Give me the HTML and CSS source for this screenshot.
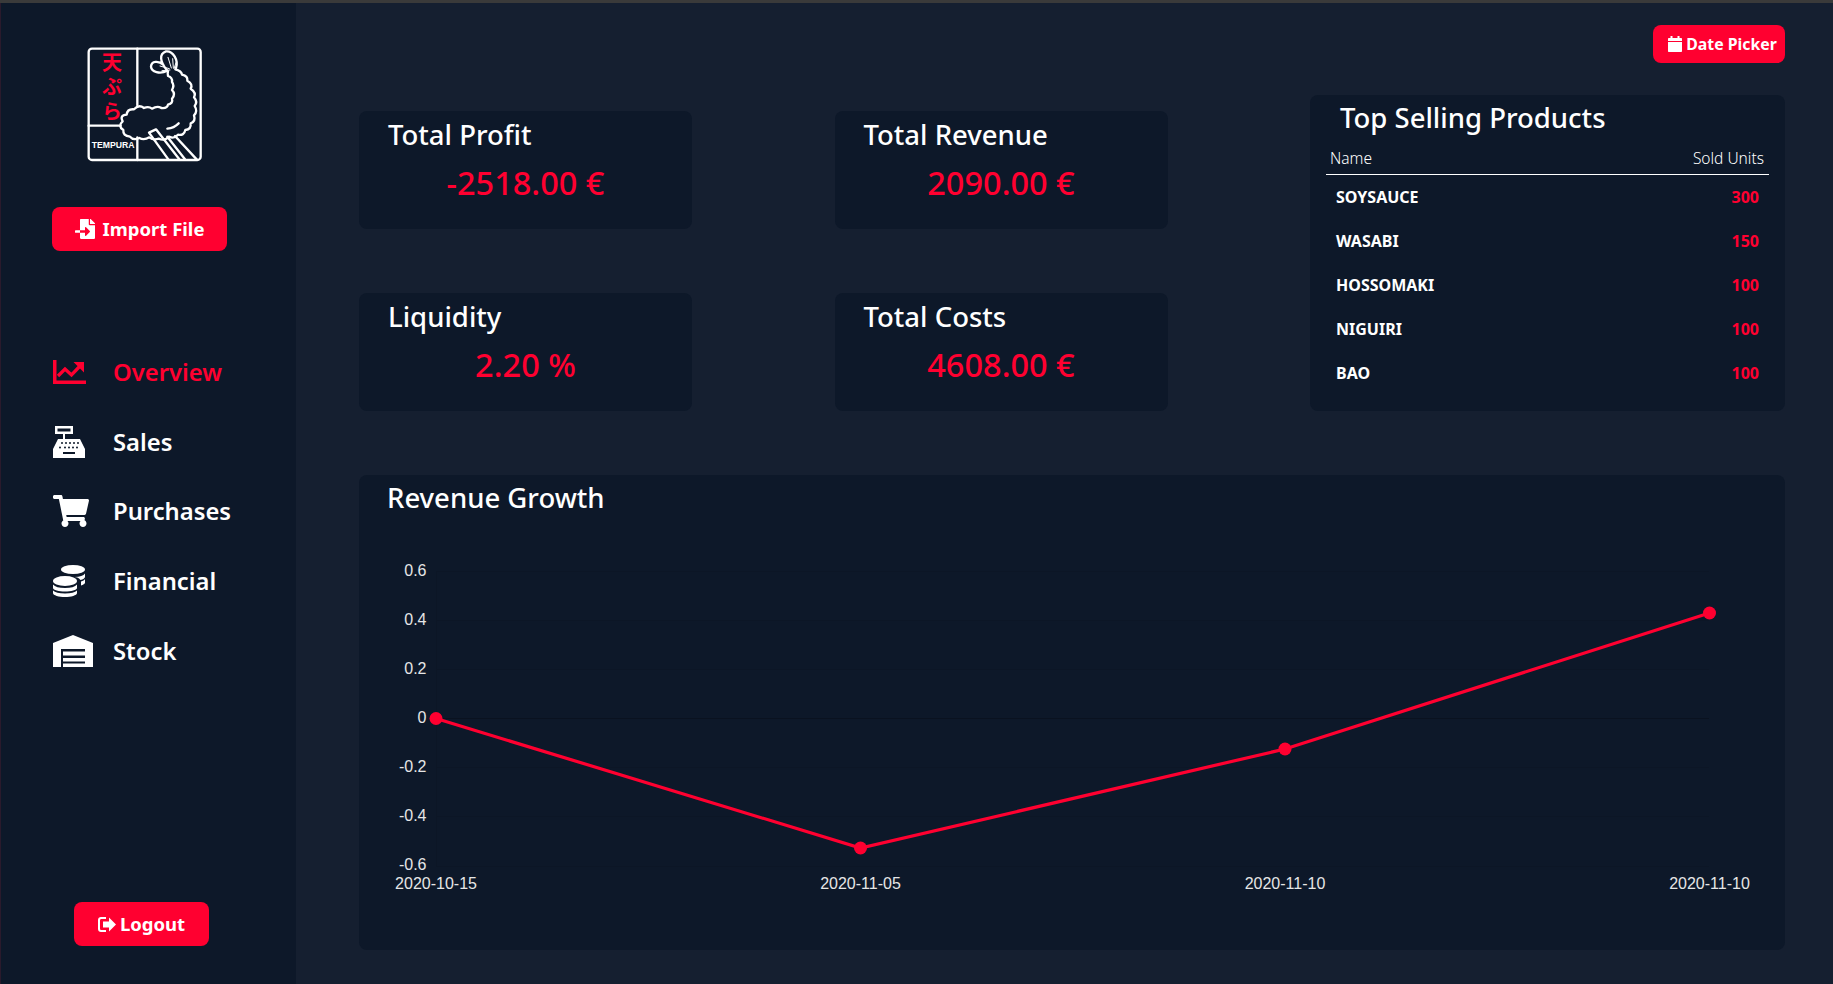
FILE: index.html
```html
<!DOCTYPE html>
<html lang="en">
<head>
<meta charset="utf-8">
<title>Tempura Dashboard</title>
<link rel="stylesheet" href="styles.css">
</head>
<body>
<div class="app">
  <aside class="sidebar">
    <svg class="logo" viewBox="0 0 390 390" aria-label="Tempura logo">
      <g fill="none" stroke="#fff" stroke-width="7" stroke-linecap="round" stroke-linejoin="round">
        <rect x="26" y="26" width="336" height="334" rx="10"/>
        <path d="M172 26V196M172 292V360M26 257H122"/>
        <path d="M262 92C240 66 236 42 258 34C280 32 296 62 288 84M262 92C240 104 214 96 213 80C214 62 236 62 250 74"/>
        <path d="M264 52L274 84M278 56L280 84M288 68L282 86M240 78L268 86M246 92L270 90" stroke-width="3"/>
        <path d="M286 88Q304 92 306 104Q324 108 322 122Q340 132 332 146Q350 158 342 172Q354 186 344 198Q354 214 342 226Q348 244 332 250Q334 268 316 270Q312 288 294 284Q282 298 266 290Q254 304 236 296Q220 302 208 292Q192 302 178 294Q160 302 150 290Q128 288 130 270Q112 258 128 244Q118 226 140 224Q142 206 162 208Q176 192 192 204Q206 198 216 206Q232 196 244 204Q262 206 264 194Q280 190 276 176Q288 162 276 150Q284 136 276 126Q278 112 264 108Q262 100 264 94"/>
        <path d="M262 266Q282 264 296 250"/>
        <path d="M265 358L207 278L228 268L298 358M315 358L262 290M350 358L285 288"/>
      </g>
      <text class="logo-kana" x="96" y="37">天ぷら</text>
      <text class="logo-word" x="35" y="323">TEMPURA</text>
    </svg>

    <button class="btn btn-import">
      <svg class="btn-icon-import" viewBox="0 0 512 512"><path fill="#fff" d="M16 288c-8.800 0-16 7.200-16 16v32c0 8.800 7.200 16 16 16h112v-64zm489-183L407.100 7c-4.500-4.500-10.600-7-17-7H384v128h128v-6.100c0-6.300-2.500-12.400-7-16.900zm-153 31V0H152c-13.300 0-24 10.700-24 24v264h128v-65.200c0-14.300 17.300-21.400 27.400-11.300L379 308c6.600 6.700 6.600 17.400 0 24l-95.700 96.400c-10.100 10.100-27.400 3-27.400-11.300V352H128v136c0 13.300 10.700 24 24 24h336c13.300 0 24-10.700 24-24V160H376c-13.200 0-24-10.800-24-24z"/></svg>
      <span class="btn-label">Import File</span>
    </button>

    <nav class="nav">
      <a class="nav-item active">
        <span class="nav-icon">
          <svg width="33" height="24" viewBox="0 0 33 24"><path fill="#ff0030" d="M0 0H3.500V20.500H33V24H0Z"/><path fill="none" stroke="#ff0030" stroke-width="3.300" d="M5 16L12 9L18.500 15L28 5"/><path fill="#ff0030" d="M20.500 2H31V12.500Z"/></svg>
        </span>Overview
      </a>
      <a class="nav-item">
        <span class="nav-icon">
          <svg width="32" height="32" viewBox="0 0 32 32"><path fill="#fff" fill-rule="evenodd" d="M2 0H20V8H12V13H27L32 23V32H0V23L5 13H10V8H2ZM4.500 2.500V5.500H17.500V2.500ZM10 26V28H22V26Z"/><g fill="#0d1829"><circle cx="9" cy="17" r="1"/><circle cx="13" cy="17" r="1"/><circle cx="17" cy="17" r="1"/><circle cx="21" cy="17" r="1"/><circle cx="25" cy="17" r="1"/><circle cx="7" cy="21.500" r="1"/><circle cx="12" cy="21.500" r="1"/><circle cx="16" cy="21.500" r="1"/><circle cx="20" cy="21.500" r="1"/><circle cx="24" cy="21.500" r="1"/></g></svg>
        </span>Sales
      </a>
      <a class="nav-item">
        <span class="nav-icon">
          <svg width="36" height="32" viewBox="0 0 576 512"><path fill="#fff" d="M528.120 301.319l47.273-208C578.806 78.301 567.391 64 551.990 64H159.208l-9.166-44.810C147.758 8.021 137.930 0 126.529 0H24C10.745 0 0 10.745 0 24v16c0 13.255 10.745 24 24 24h69.883l70.248 343.435C147.325 417.100 136 435.222 136 456c0 30.928 25.072 56 56 56s56-25.072 56-56c0-15.674-6.447-29.835-16.824-40h209.647C430.447 426.165 424 440.326 424 456c0 30.928 25.072 56 56 56s56-25.072 56-56c0-22.172-12.888-41.332-31.579-50.405l5.517-24.276c3.413-15.018-8.002-29.319-23.403-29.319H218.117l-6.545-32h293.145c11.206 0 20.920-7.754 23.403-18.681z"/></svg>
        </span>Purchases
      </a>
      <a class="nav-item">
        <span class="nav-icon">
          <svg width="32" height="32" viewBox="0 0 32 32"><g fill="#fff"><ellipse cx="20" cy="4.500" rx="12" ry="4.500"/><path d="M32 8.500V12C32 13 30 14.500 27.500 15C26 13 24 12.300 21.500 12C27 12 30.500 10.500 32 8.500Z"/><path d="M32 14V18C32 18.500 30 20 28 20.500V16.500C30 16 31.500 15 32 14Z"/><ellipse cx="12" cy="16" rx="12" ry="5"/><path d="M0 19.500C2 22 6 23 12 23C18 23 22 22 24 19.500V23C24 25 18 26.500 12 26.500C6 26.500 0 25 0 23Z"/><path d="M0 25.500C2 27.500 6 28.500 12 28.500C18 28.500 22 27.500 24 25.500V28C24 30.500 18 32 12 32C6 32 0 30.500 0 28Z"/></g></svg>
        </span>Financial
      </a>
      <a class="nav-item">
        <span class="nav-icon">
          <svg width="40" height="32" viewBox="0 0 40 32"><path fill="#fff" d="M0 8L20 0L40 8V32H32V14H8V32H0Z"/><path fill="#fff" d="M10 16.500H32V20.500H10ZM10 23H32V26.500H10ZM10 28.500H32V32H10Z"/></svg>
        </span>Stock
      </a>
    </nav>

    <button class="btn btn-logout">
      <svg width="18" height="15" viewBox="0 0 18 15"><path fill="#fff" d="M8 0H3C1.300 0 0 1.300 0 3V12C0 13.700 1.300 15 3 15H8V13H3.500C2.500 13 2 12.500 2 11.500V3.500C2 2.500 2.500 2 3.500 2H8ZM11 0.500L18 7.500L11 14.500V10.500H5V4.500H11Z"/></svg>
      <span class="btn-label">Logout</span>
    </button>
  </aside>

  <main class="main">
    <div class="toolbar">
      <button class="btn btn-date">
        <svg width="14" height="16" viewBox="0 0 14 16"><path fill="#fff" d="M2.500 0H4.500V2H9.500V0H11.500V2H13C13.600 2 14 2.400 14 3V5H0V3C0 2.400 0.400 2 1 2H2.500ZM0 6H14V15C14 15.600 13.600 16 13 16H1C0.400 16 0 15.600 0 15Z"/></svg>
        Date Picker
      </button>
    </div>

    <section class="stats">
      <div class="card stat">
        <h2 class="card-title">Total Profit</h2>
        <p class="stat-value">-2518.00 €</p>
      </div>
      <div class="card stat">
        <h2 class="card-title">Total Revenue</h2>
        <p class="stat-value">2090.00 €</p>
      </div>
      <div class="card products">
        <h2 class="card-title products-title">Top Selling Products</h2>
        <table class="products-table">
          <thead><tr><th>Name</th><th class="right">Sold Units</th></tr></thead>
          <tbody>
            <tr><td>SOYSAUCE</td><td class="units">300</td></tr>
            <tr><td>WASABI</td><td class="units">150</td></tr>
            <tr><td>HOSSOMAKI</td><td class="units">100</td></tr>
            <tr><td>NIGUIRI</td><td class="units">100</td></tr>
            <tr><td>BAO</td><td class="units">100</td></tr>
          </tbody>
        </table>
      </div>
      <div class="card stat">
        <h2 class="card-title">Liquidity</h2>
        <p class="stat-value">2.20 %</p>
      </div>
      <div class="card stat">
        <h2 class="card-title">Total Costs</h2>
        <p class="stat-value">4608.00 €</p>
      </div>
    </section>

    <section class="card chart-card">
      <h2 class="card-title chart-title">Revenue Growth</h2>
      <svg class="chart" viewBox="0 0 1426 435">
        <g class="grid-lines">
          <path d="M77 56.500H1350M77 105.500H1350M77 154.500H1350M77 252.500H1350M77 301.500H1350M77 351.500H1350M77.500 56V351"/>
          <path class="grid-zero" d="M77 203.500H1350"/>
        </g>
        <g class="ticks-y">
          <text x="67.500" y="61">0.6</text>
          <text x="67.500" y="110">0.4</text>
          <text x="67.500" y="159">0.2</text>
          <text x="67.500" y="208">0</text>
          <text x="67.500" y="257">-0.2</text>
          <text x="67.500" y="306">-0.4</text>
          <text x="67.500" y="355">-0.6</text>
        </g>
        <g class="ticks-x">
          <text x="77" y="374">2020-10-15</text>
          <text x="501.500" y="374">2020-11-05</text>
          <text x="926" y="374">2020-11-10</text>
          <text x="1350.500" y="374">2020-11-10</text>
        </g>
        <polyline class="series" points="77,203.500 501.500,333 926,234 1350.500,98"/>
        <g class="dots">
          <circle cx="77" cy="203.500" r="6.500"/>
          <circle cx="501.500" cy="333" r="6.500"/>
          <circle cx="926" cy="234" r="6.500"/>
          <circle cx="1350.500" cy="98" r="6.500"/>
        </g>
      </svg>
    </section>
  </main>
</div>
</body>
</html>
```

FILE: styles.css
```css
* { box-sizing: border-box; }
html, body { margin: 0; height: 100%; }
body {
  background: #151f30;
  color: #fff;
  font-family: "Noto Sans", "Open Sans", sans-serif;
  overflow: hidden;
}
.app {
  display: flex;
  height: 984px;
  border-top: 3px solid #3a3a3a;
}
.sidebar {
  width: 296px;
  flex: none;
  background: #0d1829;
  border-left: 1px solid #2a1a2c;
  padding: 37px 0 38px 51px;
  display: flex;
  flex-direction: column;
  align-items: flex-start;
}
.logo {
  width: 130px;
  height: 130px;
  margin-left: 28px;
  flex: none;
}
.logo-kana {
  fill: #ff0030;
  font-family: "Noto Sans CJK JP", sans-serif;
  font-size: 60px;
  font-weight: 700;
  writing-mode: vertical-rl;
  letter-spacing: 13px;
}
.logo-word {
  fill: #fff;
  font-family: "Liberation Sans", sans-serif;
  font-size: 26px;
  font-weight: 700;
}
.btn {
  display: inline-flex;
  align-items: center;
  justify-content: center;
  border: 0;
  border-radius: 8px;
  background: #ff0030;
  color: #fff;
  font-family: inherit;
  font-weight: 700;
  cursor: pointer;
}
.btn-label { margin-top: -2px; }
.btn-import {
  width: 175px;
  height: 44px;
  margin-top: 37px;
  gap: 8px;
  font-size: 18.500px;
}
.btn-icon-import { width: 20px; height: 20px; }
.nav {
  margin-top: 86px;
  display: flex;
  flex-direction: column;
  margin-left: 1px;
}
.nav-item {
  display: flex;
  align-items: center;
  height: 69.750px;
  font-size: 23.800px;
  font-weight: 600;
  color: #fff;
}
.nav-item.active { color: #ff0030; }
.nav-icon {
  width: 60px;
  display: flex;
  align-items: center;
}
.btn-logout {
  width: 135px;
  height: 44px;
  margin-top: auto;
  margin-left: 22px;
  gap: 4px;
  font-size: 18.500px;
}
.main {
  flex: 1;
  min-width: 0;
  padding: 22px 48px 0 63px;
}
.toolbar {
  display: flex;
  justify-content: flex-end;
}
.btn-date {
  width: 132px;
  height: 38px;
  gap: 4px;
  padding: 0 0 0 7px;
  font-size: 15.800px;
}
.stats {
  display: grid;
  grid-template-columns: 333px 333px 475px;
  grid-template-rows: 134px 182px;
  justify-content: space-between;
  margin-top: 32px;
}
.card {
  background: #0d1829;
  border-radius: 8px;
}
.stat {
  align-self: end;
  height: 118px;
  padding: 6px 0 0 29px;
}
.card-title {
  margin: 0;
  font-size: 27.500px;
  font-weight: 500;
  line-height: 36px;
}
.stat-value {
  margin: 8px 0 0 -29px;
  text-align: center;
  font-size: 32.500px;
  font-weight: 500;
  line-height: 44px;
  color: #ff0030;
}
.products {
  grid-column: 3;
  grid-row: 1 / span 2;
  padding: 5px 16px 0;
}
.products-title { margin-left: 14px; }
.products-table {
  width: 100%;
  margin-top: 6px;
  border-collapse: collapse;
}
.products-table th {
  padding: 6px 4px;
  border-bottom: 1px solid #fff;
  font-size: 15.500px;
  font-weight: 300;
  line-height: 20px;
  text-align: left;
}
.products-table th.right { text-align: right; padding-right: 5px; }
.products-table td {
  height: 44px;
  padding: 0 10px;
  font-size: 16px;
  font-weight: 700;
}
.products-table td.units {
  text-align: right;
  color: #ff0030;
}
.chart-card {
  margin-top: 64px;
  height: 475px;
}
.chart-title {
  height: 40px;
  padding: 5px 0 0 28px;
}
.chart {
  display: block;
  width: 1426px;
  height: 435px;
}
.grid-lines path {
  fill: none;
  stroke: #0c1626;
  stroke-width: 1;
}
.grid-lines .grid-zero { stroke: #0a1220; }
.ticks-y text, .ticks-x text {
  fill: #e6e6e6;
  font-family: "Liberation Sans", sans-serif;
  font-size: 16px;
}
.ticks-y text { text-anchor: end; }
.ticks-x text { text-anchor: middle; }
.series {
  fill: none;
  stroke: #ff0030;
  stroke-width: 3.200;
}
.dots circle { fill: #ff0030; }
```
